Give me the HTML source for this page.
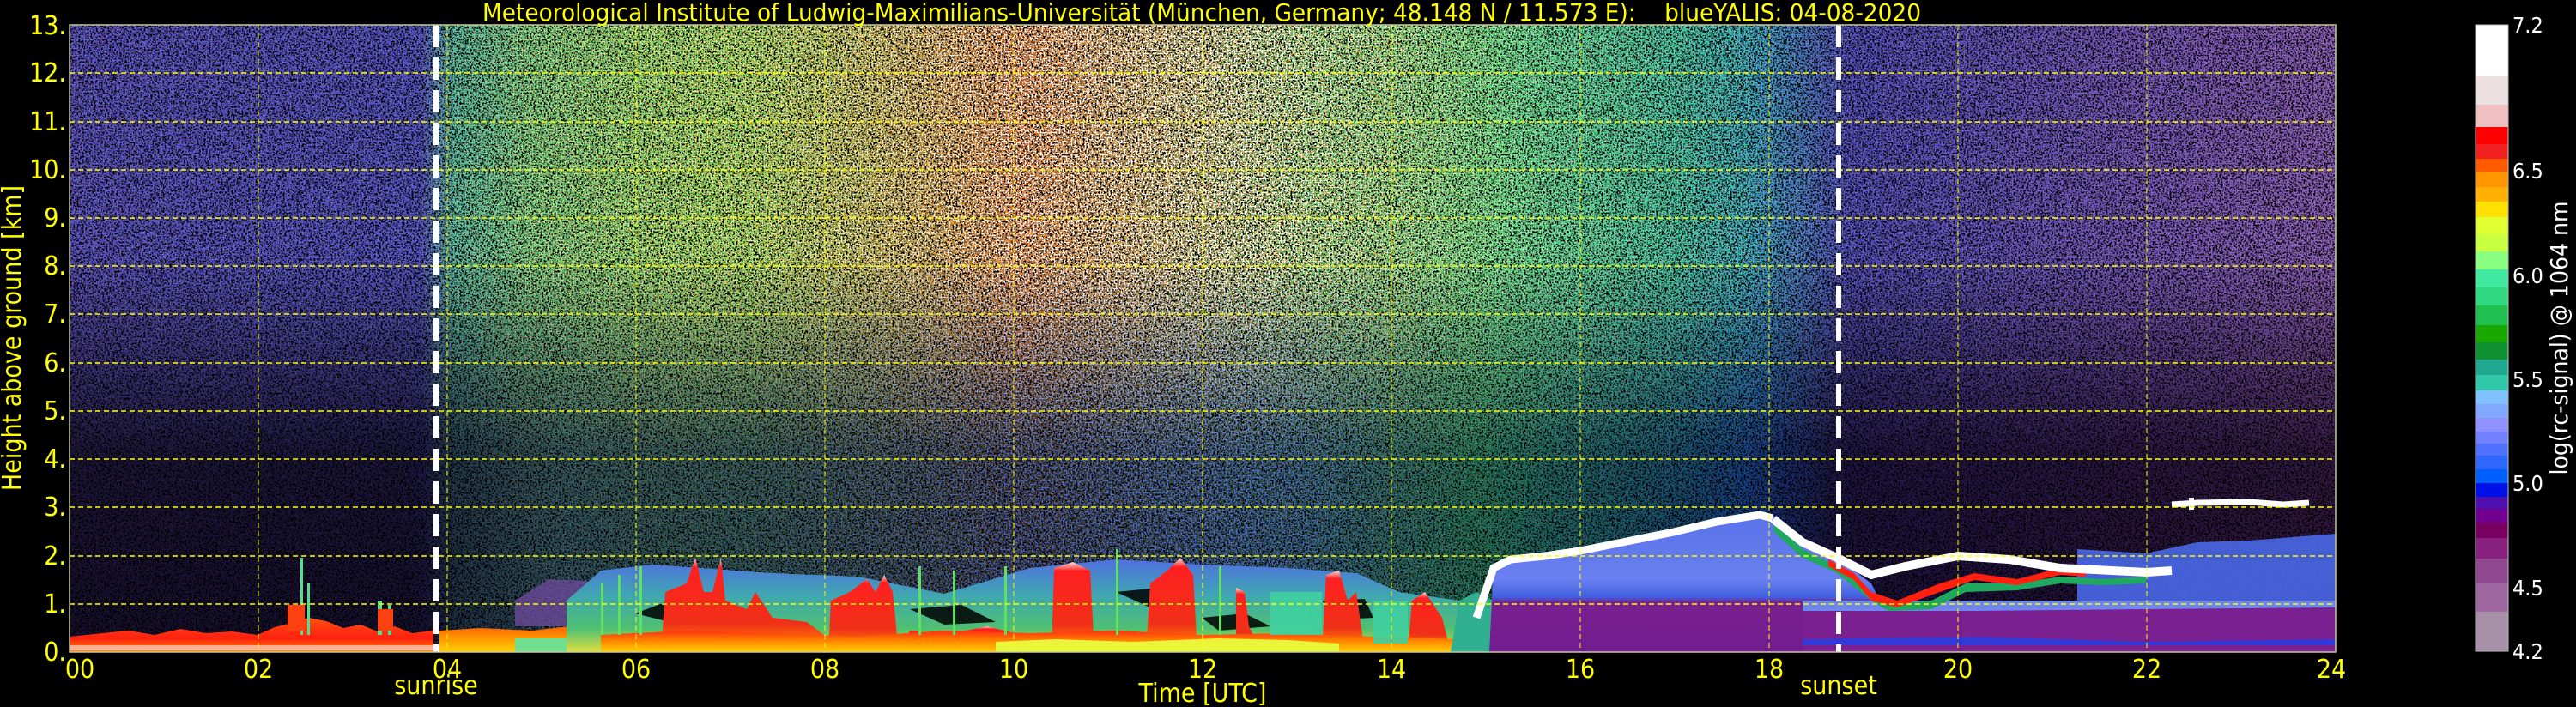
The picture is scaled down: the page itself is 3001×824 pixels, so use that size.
<!DOCTYPE html>
<html><head><meta charset="utf-8"><style>
html,body{margin:0;padding:0;background:#000;}
svg{display:block;}
text{font-family:"DejaVu Sans Condensed","DejaVu Sans","Liberation Sans",sans-serif;}
</style></head><body>
<svg width="3001" height="824" viewBox="0 0 3001 824" xmlns="http://www.w3.org/2000/svg">
<defs>
<filter id="n1" x="0" y="0" width="100%" height="100%">
  <feTurbulence type="fractalNoise" baseFrequency="0.5" numOctaves="1" seed="3" result="n"/>
  <feColorMatrix in="n" type="matrix" values="0 0 0 0 0  0 0 0 0 0  0 0 0 0 0  25 0 0 0 -12.8" result="a"/>
  <feComposite in="SourceGraphic" in2="a" operator="in"/>
</filter>
<filter id="n2" x="0" y="0" width="100%" height="100%">
  <feTurbulence type="fractalNoise" baseFrequency="0.5" numOctaves="1" seed="17" result="n"/>
  <feColorMatrix in="n" type="matrix" values="0 0 0 0 0  0 0 0 0 0  0 0 0 0 0  25 0 0 0 -12.8" result="a"/>
  <feComposite in="SourceGraphic" in2="a" operator="in"/>
</filter>
<filter id="n3" x="0" y="0" width="100%" height="100%">
  <feTurbulence type="fractalNoise" baseFrequency="0.5" numOctaves="1" seed="41" result="n"/>
  <feColorMatrix in="n" type="matrix" values="0 0 0 0 0  0 0 0 0 0  0 0 0 0 0  25 0 0 0 -13.2" result="a"/>
  <feComposite in="SourceGraphic" in2="a" operator="in"/>
</filter>
<linearGradient id="gA" x1="81" x2="2721" y1="0" y2="0" gradientUnits="userSpaceOnUse">
  <stop offset="0" stop-color="#5060c8"/>
  <stop offset="0.155" stop-color="#5a58c0"/>
  <stop offset="0.17" stop-color="#70c080"/>
  <stop offset="0.26" stop-color="#d0d040"/>
  <stop offset="0.40" stop-color="#f09030"/>
  <stop offset="0.50" stop-color="#ffb060"/>
  <stop offset="0.58" stop-color="#e0c040"/>
  <stop offset="0.64" stop-color="#70e070"/>
  <stop offset="0.71" stop-color="#40c890"/>
  <stop offset="0.75" stop-color="#4080e0"/>
  <stop offset="0.785" stop-color="#6050c0"/>
  <stop offset="1" stop-color="#7050b8"/>
</linearGradient>
<linearGradient id="gB" x1="81" x2="2721" y1="0" y2="0" gradientUnits="userSpaceOnUse">
  <stop offset="0" stop-color="#6040b0"/>
  <stop offset="0.155" stop-color="#5048c0"/>
  <stop offset="0.17" stop-color="#40c0a0"/>
  <stop offset="0.30" stop-color="#70e050"/>
  <stop offset="0.42" stop-color="#e07030"/>
  <stop offset="0.55" stop-color="#60d060"/>
  <stop offset="0.63" stop-color="#50e080"/>
  <stop offset="0.74" stop-color="#30c8a0"/>
  <stop offset="0.785" stop-color="#4040b0"/>
  <stop offset="1" stop-color="#9060b0"/>
</linearGradient>
<linearGradient id="gC" x1="81" x2="2721" y1="0" y2="0" gradientUnits="userSpaceOnUse">
  <stop offset="0" stop-color="#8090f0" stop-opacity="0.3"/>
  <stop offset="0.155" stop-color="#8090f0" stop-opacity="0.3"/>
  <stop offset="0.20" stop-color="#ffffa0" stop-opacity="0.5"/>
  <stop offset="0.42" stop-color="#ffffff" stop-opacity="0.9"/>
  <stop offset="0.52" stop-color="#ffffff" stop-opacity="1"/>
  <stop offset="0.62" stop-color="#e0ffe0" stop-opacity="0.6"/>
  <stop offset="0.75" stop-color="#a0a0ff" stop-opacity="0.3"/>
  <stop offset="1" stop-color="#c080d0" stop-opacity="0.3"/>
</linearGradient>
<linearGradient id="gLow" x1="81" x2="2721" y1="0" y2="0" gradientUnits="userSpaceOnUse">
  <stop offset="0" stop-color="#302030"/>
  <stop offset="0.15" stop-color="#302030"/>
  <stop offset="0.17" stop-color="#403060"/>
  <stop offset="0.22" stop-color="#4050b0"/>
  <stop offset="0.3" stop-color="#3050c0"/>
  <stop offset="0.55" stop-color="#3058c0"/>
  <stop offset="0.62" stop-color="#307090"/>
  <stop offset="0.74" stop-color="#3040a0"/>
  <stop offset="0.78" stop-color="#402040"/>
  <stop offset="1" stop-color="#402040"/>
</linearGradient>
<linearGradient id="vfade" x1="0" x2="0" y1="0" y2="1">
  <stop offset="0" stop-color="#fff" stop-opacity="0"/>
  <stop offset="0.5" stop-color="#fff" stop-opacity="0.85"/>
  <stop offset="1" stop-color="#fff" stop-opacity="0.95"/>
</linearGradient>
<linearGradient id="gAer" x1="0" x2="0" y1="0" y2="1">
  <stop offset="0" stop-color="#ff5010"/>
  <stop offset="0.6" stop-color="#ff2010"/>
  <stop offset="1" stop-color="#ff9000"/>
</linearGradient>
<linearGradient id="gBase" x1="0" x2="0" y1="0" y2="1">
  <stop offset="0" stop-color="#ff3010"/>
  <stop offset="0.5" stop-color="#ff8a00"/>
  <stop offset="1" stop-color="#ffd000"/>
</linearGradient>
<linearGradient id="gTow" x1="0" x2="0" y1="0" y2="1">
  <stop offset="0" stop-color="#5070e0"/>
  <stop offset="0.4" stop-color="#40a8b0"/>
  <stop offset="0.75" stop-color="#50c070"/>
  <stop offset="1" stop-color="#e0e040"/>
</linearGradient>
<linearGradient id="gRed" x1="0" x2="0" y1="0" y2="1">
  <stop offset="0" stop-color="#f8e0e0"/>
  <stop offset="0.1" stop-color="#ff2020"/>
  <stop offset="0.7" stop-color="#f03018"/>
  <stop offset="1" stop-color="#ffa000"/>
</linearGradient>
<linearGradient id="gEve" x1="0" x2="0" y1="591" y2="760" gradientUnits="userSpaceOnUse">
  <stop offset="0" stop-color="#5870e8"/>
  <stop offset="0.5" stop-color="#6a80f0"/>
  <stop offset="0.62" stop-color="#4060e0"/>
  <stop offset="0.66" stop-color="#7a2090"/>
  <stop offset="1" stop-color="#701c90"/>
</linearGradient>
<mask id="mLow"><rect x="81" y="300" width="2640" height="460" fill="url(#vfade)"/></mask>
</defs>

<rect x="81" y="29" width="2640" height="731" fill="#000"/>
<rect x="81" y="29" width="2640" height="731" fill="url(#gA)" filter="url(#n1)"/>
<rect x="81" y="29" width="2640" height="731" fill="url(#gB)" filter="url(#n2)"/>
<rect x="81" y="29" width="2640" height="731" fill="url(#gC)" filter="url(#n3)"/>
<rect x="81" y="300" width="2640" height="460" fill="url(#gLow)" mask="url(#mLow)" style="mix-blend-mode:multiply"/>

<polygon fill="url(#gAer)" points="81,760 81,742 120,738 150,735 180,740 210,733 240,738 270,736 300,740 320,731 340,726 360,720 380,724 400,732 420,728 440,736 460,730 480,738 505,735 505,760"/>
<rect x="81" y="752" width="424" height="6" fill="#f8d0d0" opacity="0.7"/>
<g fill="#50e090"><rect x="350" y="650" width="3" height="90"/><rect x="358" y="680" width="3" height="60"/><rect x="440" y="700" width="5" height="40"/><rect x="452" y="705" width="4" height="35"/></g>
<g fill="#ff4010"><rect x="335" y="705" width="20" height="30"/><rect x="440" y="710" width="18" height="25"/></g>
<polygon fill="#6a4a98" opacity="0.8" points="600,700 640,675 700,678 740,700 740,730 600,730"/>
<polygon fill="url(#gBase)" points="512,760 512,735 560,732 620,735 680,728 740,720 740,760"/>
<rect x="600" y="744" width="150" height="16" fill="#70e090"/>

<polygon fill="url(#gTow)" points="660,760 660,700 700,665 760,658 900,668 1000,672 1100,692 1200,662 1300,652 1400,658 1500,662 1580,668 1630,690 1700,700 1720,760"/>
<g fill="#000" opacity="0.85"><polygon points="740,715 780,700 820,715 780,725"/><polygon points="1060,710 1120,705 1160,725 1100,728"/><polygon points="1300,690 1350,685 1380,700 1340,708"/><polygon points="1400,720 1450,715 1480,730 1420,735"/><polygon points="1540,700 1590,698 1600,720 1560,722"/></g>
<polygon fill="url(#gRed)" points="770,760 775,690 800,680 810,650 820,690 830,690 840,650 845,700 870,710 880,690 900,720 940,725 960,740 960,760"/>
<polygon fill="url(#gRed)" points="965,760 968,700 990,690 1010,675 1020,690 1030,670 1040,690 1045,740 1050,760"/>
<polygon fill="url(#gRed)" points="1050,760 1060,735 1100,740 1150,730 1190,740 1200,760"/>
<polygon fill="url(#gRed)" points="1225,760 1228,662 1250,655 1270,665 1275,760"/>
<polygon fill="url(#gRed)" points="1335,760 1340,680 1360,665 1375,650 1390,670 1395,760"/>
<polygon fill="url(#gRed)" points="1440,760 1440,685 1450,690 1455,730 1470,760"/>
<polygon fill="url(#gRed)" points="1540,760 1545,670 1560,665 1570,700 1580,690 1590,760"/>
<polygon fill="url(#gRed)" points="1640,760 1645,700 1660,690 1680,720 1690,760"/>
<polygon fill="url(#gBase)" points="700,760 700,740 800,735 900,738 1000,742 1100,735 1200,738 1300,735 1400,740 1500,738 1600,742 1700,745 1700,760"/>
<polygon fill="#e8ff40" opacity="0.9" points="1160,760 1160,748 1230,745 1320,748 1420,744 1500,746 1560,750 1560,760"/>
<g fill="#40d0a0" opacity="0.9"><rect x="1480" y="690" width="60" height="50"/><rect x="1600" y="700" width="40" height="50"/></g>
<g fill="#60e060"><rect x="700" y="680" width="3" height="60"/><rect x="720" y="670" width="3" height="70"/><rect x="745" y="660" width="3" height="80"/><rect x="1070" y="660" width="3" height="80"/><rect x="1110" y="665" width="3" height="75"/><rect x="1170" y="660" width="3" height="80"/><rect x="1300" y="640" width="3" height="100"/><rect x="1420" y="660" width="3" height="80"/></g>
<polygon fill="#30b090" points="1690,760 1700,700 1720,690 1740,700 1740,760"/>
<polygon fill="url(#gEve)" points="1735,760 1740,660 1760,650 1800,646 1841,640 1900,628 1950,618 2000,606 2061,598 2080,610 2100,635 2130,650 2160,665 2180,680 2190,700 2220,710 2300,705 2400,705 2450,700 2500,710 2600,705 2721,700 2721,760"/>
<polyline fill="none" stroke="#fff" stroke-width="9" points="1720,720 1740,662 1760,652 1800,648 1841,642 1900,630 1950,620 2000,608 2050,600 2065,604"/>
<polygon fill="#4a68e8" opacity="0.9" points="2420,760 2420,640 2500,645 2560,632 2620,630 2721,622 2721,760"/>
<polygon fill="#7a2090" points="2100,760 2100,710 2200,708 2300,710 2400,705 2500,708 2600,706 2721,705 2721,760"/>
<polygon fill="#2040e8" opacity="0.8" points="2100,745 2300,742 2500,748 2721,745 2721,752 2100,752"/>
<polygon fill="#6e86f0" points="2100,712 2300,712 2500,710 2721,708 2721,700 2100,700"/>
<polygon fill="#20a860" points="2066,608 2100,640 2140,660 2180,690 2200,705 2250,700 2290,680 2350,680 2400,672 2450,675 2500,672 2500,680 2450,682 2400,680 2350,688 2290,690 2250,710 2200,712 2180,700 2140,668 2100,650 2066,620"/>
<polygon fill="#ff2010" points="2130,652 2160,668 2180,690 2210,700 2260,680 2300,668 2350,675 2400,662 2430,665 2430,672 2400,670 2350,682 2300,676 2260,690 2210,708 2180,700 2160,676 2130,660"/>
<polyline fill="none" stroke="#fff" stroke-width="10" points="2066,605 2100,632 2140,650 2180,670 2220,660 2281,648 2340,652 2400,662 2460,665 2501,667 2530,665"/>
<polyline fill="none" stroke="#fff" stroke-width="7" points="2530,588 2560,586 2620,585 2660,588 2690,586"/>
<rect x="2550" y="580" width="6" height="14" fill="#fff"/>

<g stroke="#ffff00" stroke-width="1.6" stroke-dasharray="6,4" fill="none">
<line x1="81" x2="2721" y1="704" y2="704"/><line x1="81" x2="2721" y1="648" y2="648"/>
<line x1="81" x2="2721" y1="591" y2="591"/><line x1="81" x2="2721" y1="535" y2="535"/>
<line x1="81" x2="2721" y1="479" y2="479"/><line x1="81" x2="2721" y1="423" y2="423"/>
<line x1="81" x2="2721" y1="366" y2="366"/><line x1="81" x2="2721" y1="310" y2="310"/>
<line x1="81" x2="2721" y1="254" y2="254"/><line x1="81" x2="2721" y1="198" y2="198"/>
<line x1="81" x2="2721" y1="142" y2="142"/><line x1="81" x2="2721" y1="85" y2="85"/>
</g>
<g stroke="#ffff00" stroke-width="1" stroke-dasharray="6,4" fill="none">
<line x1="301" x2="301" y1="29" y2="760"/><line x1="521" x2="521" y1="29" y2="760"/>
<line x1="741" x2="741" y1="29" y2="760"/><line x1="961" x2="961" y1="29" y2="760"/>
<line x1="1181" x2="1181" y1="29" y2="760"/><line x1="1401" x2="1401" y1="29" y2="760"/>
<line x1="1621" x2="1621" y1="29" y2="760"/><line x1="1841" x2="1841" y1="29" y2="760"/>
<line x1="2061" x2="2061" y1="29" y2="760"/><line x1="2281" x2="2281" y1="29" y2="760"/>
<line x1="2501" x2="2501" y1="29" y2="760"/>
</g>
<g stroke="#fff" stroke-width="6" stroke-dasharray="26,12">
<line x1="508" x2="508" y1="29" y2="760"/><line x1="2142" x2="2142" y1="29" y2="760"/>
</g>
<rect x="81" y="29" width="2640" height="731" fill="none" stroke="#c8c8a0" stroke-width="1.5"/>

<text x="1400" y="24" font-size="28" fill="#ffff00" text-anchor="middle" textLength="1676" lengthAdjust="spacingAndGlyphs" xml:space="preserve" style="white-space:pre">Meteorological Institute of Ludwig-Maximilians-Universität (München, Germany; 48.148 N / 11.573 E):    blueYALIS: 04-08-2020</text>

<g font-size="30" fill="#ffff00" text-anchor="end">
<text x="77" y="770">0.</text><text x="77" y="714">1.</text><text x="77" y="658">2.</text>
<text x="77" y="601">3.</text><text x="77" y="545">4.</text><text x="77" y="489">5.</text>
<text x="77" y="433">6.</text><text x="77" y="376">7.</text><text x="77" y="320">8.</text>
<text x="77" y="264">9.</text><text x="77" y="208">10.</text><text x="77" y="152">11.</text>
<text x="77" y="95">12.</text><text x="77" y="40">13.</text>
</g>
<text transform="translate(24,394) rotate(-90)" font-size="30" fill="#ffff00" text-anchor="middle">Height above ground [km]</text>
<g font-size="30" fill="#ffff00" text-anchor="middle">
<text x="93" y="790">00</text><text x="301" y="790">02</text><text x="521" y="790">04</text>
<text x="741" y="790">06</text><text x="961" y="790">08</text><text x="1181" y="790">10</text>
<text x="1401" y="790">12</text><text x="1621" y="790">14</text><text x="1841" y="790">16</text>
<text x="2061" y="790">18</text><text x="2281" y="790">20</text><text x="2501" y="790">22</text>
<text x="2716" y="790">24</text>
<text x="508" y="809">sunrise</text><text x="2142" y="809">sunset</text>
<text x="1401" y="818">Time [UTC]</text>
</g>

<g>
<rect x="2884" y="29" width="38" height="60" fill="#ffffff"/>
<rect x="2884" y="88" width="38" height="35" fill="#ece0e0"/>
<rect x="2884" y="122" width="38" height="27" fill="#f0c0c0"/>
<rect x="2884" y="148" width="38" height="21" fill="#ff0000"/>
<rect x="2884" y="168" width="38" height="18" fill="#f02020"/>
<rect x="2884" y="185" width="38" height="16" fill="#ff5a00"/>
<rect x="2884" y="200" width="38" height="19" fill="#ff9600"/>
<rect x="2884" y="218" width="38" height="18" fill="#ffb000"/>
<rect x="2884" y="235" width="38" height="19" fill="#ffe000"/>
<rect x="2884" y="253" width="38" height="21" fill="#e0ff30"/>
<rect x="2884" y="273" width="38" height="21" fill="#c8ff40"/>
<rect x="2884" y="293" width="38" height="22" fill="#88ff80"/>
<rect x="2884" y="314" width="38" height="22" fill="#40e8a0"/>
<rect x="2884" y="335" width="38" height="22" fill="#30d880"/>
<rect x="2884" y="356" width="38" height="24" fill="#20c050"/>
<rect x="2884" y="379" width="38" height="21" fill="#18a800"/>
<rect x="2884" y="399" width="38" height="21" fill="#109030"/>
<rect x="2884" y="419" width="38" height="19" fill="#20a890"/>
<rect x="2884" y="437" width="38" height="19" fill="#30c8a8"/>
<rect x="2884" y="455" width="38" height="17" fill="#80c0ff"/>
<rect x="2884" y="471" width="38" height="17" fill="#80a8ff"/>
<rect x="2884" y="487" width="38" height="17" fill="#9090ff"/>
<rect x="2884" y="503" width="38" height="15" fill="#7080ff"/>
<rect x="2884" y="517" width="38" height="15" fill="#5070ff"/>
<rect x="2884" y="531" width="38" height="17" fill="#3068ff"/>
<rect x="2884" y="547" width="38" height="17" fill="#0060ff"/>
<rect x="2884" y="563" width="38" height="17" fill="#0010e8"/>
<rect x="2884" y="579" width="38" height="15" fill="#5010b0"/>
<rect x="2884" y="593" width="38" height="17" fill="#700090"/>
<rect x="2884" y="609" width="38" height="19" fill="#780060"/>
<rect x="2884" y="627" width="38" height="25" fill="#882080"/>
<rect x="2884" y="651" width="38" height="30" fill="#904890"/>
<rect x="2884" y="680" width="38" height="34" fill="#a068a0"/>
<rect x="2884" y="713" width="38" height="46" fill="#a890a8"/>
<rect x="2884" y="29" width="38" height="730" fill="none" stroke="#bbb" stroke-width="1"/>
</g>
<g font-size="25" fill="#ffffff">
<text x="2927" y="38">7.2</text><text x="2927" y="208">6.5</text><text x="2927" y="330">6.0</text>
<text x="2927" y="451">5.5</text><text x="2927" y="572">5.0</text><text x="2927" y="694">4.5</text>
<text x="2927" y="768">4.2</text>
</g>
<text transform="translate(2991,394) rotate(-90)" font-size="28" fill="#ffffff" text-anchor="middle">log(rc-signal) @ 1064 nm</text>
</svg>
</body></html>
